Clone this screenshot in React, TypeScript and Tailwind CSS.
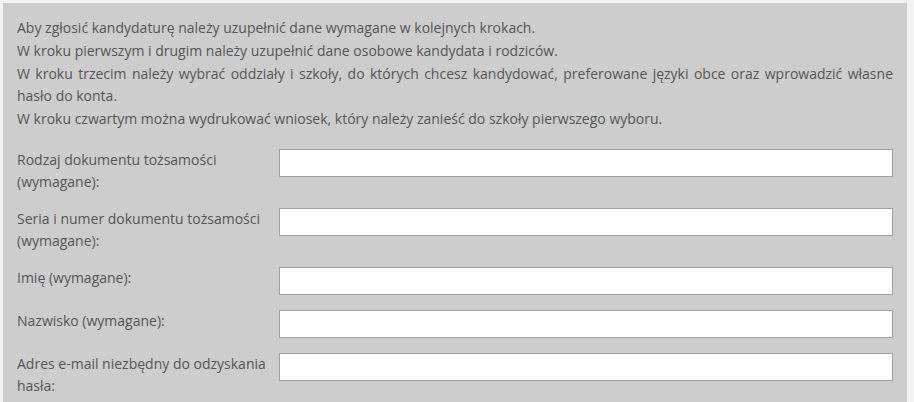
const fields = [
  "Rodzaj dokumentu tożsamości (wymagane):",
  "Seria i numer dokumentu tożsamości (wymagane):",
  "Imię (wymagane):",
  "Nazwisko (wymagane):",
  "Adres e-mail niezbędny do odzyskania hasła:",
];

export default function App() {
  return (
    <div className="min-h-[402px] bg-[#f3f3f3] pl-[3px] pr-[7px] pt-[3px] font-['Open_Sans',sans-serif] text-[14px] leading-[22.75px] text-[#555]">
      <div className="bg-[#cdcdcd] pl-[14px] pr-[14px] pt-[14px] pb-4">
        <div className="text-justify">
          <p>Aby zgłosić kandydaturę należy uzupełnić dane wymagane w kolejnych krokach.</p>
          <p>W kroku pierwszym i drugim należy uzupełnić dane osobowe kandydata i rodziców.</p>
          <p>
            W kroku trzecim należy wybrać oddziały i szkoły, do których chcesz kandydować, preferowane języki obce oraz wprowadzić własne hasło do konta.
          </p>
          <p>W kroku czwartym można wydrukować wniosek, który należy zanieść do szkoły pierwszego wyboru.</p>
        </div>

        <div className="mt-[18px] flex flex-col gap-[15px]">
          {fields.map((f) => (
            <div key={f} className="flex items-start">
              <label className="w-[262px] shrink-0 pr-2 leading-[22px]">{f}</label>
              <input className="h-[28px] flex-1 border border-[#a0a0a0] bg-white" />
            </div>
          ))}
        </div>
      </div>
    </div>
  );
}
